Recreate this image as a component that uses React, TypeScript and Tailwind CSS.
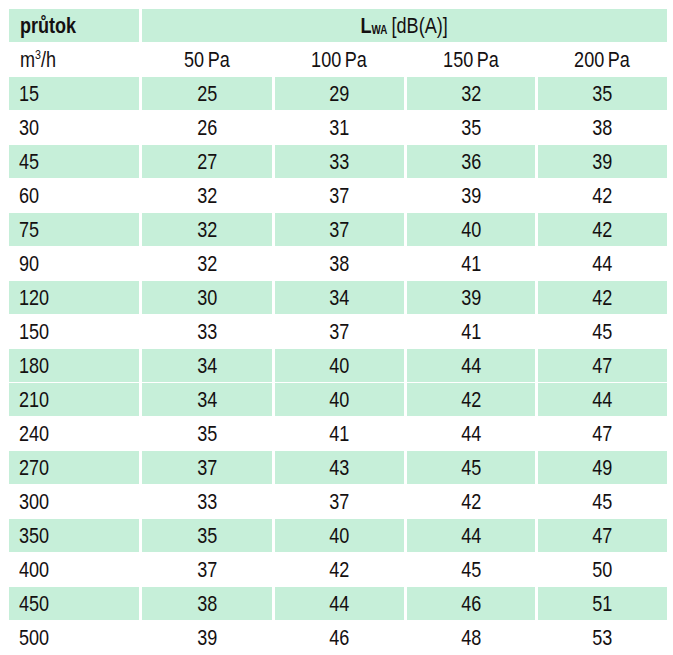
import React from "react";

const rows: [string, string, string, string, string, boolean][] = [
  ["15", "25", "29", "32", "35", true],
  ["30", "26", "31", "35", "38", false],
  ["45", "27", "33", "36", "39", true],
  ["60", "32", "37", "39", "42", false],
  ["75", "32", "37", "40", "42", true],
  ["90", "32", "38", "41", "44", false],
  ["120", "30", "34", "39", "42", true],
  ["150", "33", "37", "41", "45", false],
  ["180", "34", "40", "44", "47", true],
  ["210", "34", "40", "42", "44", true],
  ["240", "35", "41", "44", "47", false],
  ["270", "37", "43", "45", "49", true],
  ["300", "33", "37", "42", "45", false],
  ["350", "35", "40", "44", "47", true],
  ["400", "37", "42", "45", "50", false],
  ["450", "38", "44", "46", "51", true],
  ["500", "39", "46", "48", "53", false],
];

const font = {
  fontFamily: '"Liberation Sans Narrow", "Arial Narrow", "Liberation Sans", Arial, sans-serif',
};

function T({ children, left }: { children: React.ReactNode; left?: boolean }) {
  return (
    <span className={`inline-block whitespace-nowrap scale-x-[0.82] ${left ? "origin-left" : "origin-center"}`}>
      {children}
    </span>
  );
}

export default function App() {
  return (
    <div className="w-[673px] h-[655px] bg-white pt-[9px] pl-[9px] text-[#141011] text-[22px] leading-none" style={font}>
      <div className="grid grid-cols-[130px_130px_129px_128px_129px] gap-x-[3px] gap-y-[1px] auto-rows-[33px]">
        <div className="bg-[#c6efd9] flex items-center pl-[11px] font-bold">
          <T left>průtok</T>
        </div>
        <div className="col-span-4 bg-[#c6efd9] flex items-center justify-center">
          <T>
            <span className="font-bold">L</span>
            <span className="font-bold text-[12px] relative top-[1px]">WA</span>
            <span className="ml-[5px]">[dB(A)]</span>
          </T>
        </div>

        <div className="flex items-center pl-[11px]">
          <T left>
            m<sup className="text-[13px] relative top-[-8px]">3</sup>/h
          </T>
        </div>
        <div className="flex items-center justify-center"><T>50&#8201;Pa</T></div>
        <div className="flex items-center justify-center"><T>100&#8201;Pa</T></div>
        <div className="flex items-center justify-center"><T>150&#8201;Pa</T></div>
        <div className="flex items-center justify-center"><T>200&#8201;Pa</T></div>

        {rows.map((r) => {
          const bg = r[5] ? "bg-[#c6efd9]" : "bg-white";
          return (
            <React.Fragment key={r[0]}>
              <div className={`${bg} flex items-center pl-[10px]`}><T left>{r[0]}</T></div>
              <div className={`${bg} flex items-center justify-center`}><T>{r[1]}</T></div>
              <div className={`${bg} flex items-center justify-center`}><T>{r[2]}</T></div>
              <div className={`${bg} flex items-center justify-center`}><T>{r[3]}</T></div>
              <div className={`${bg} flex items-center justify-center`}><T>{r[4]}</T></div>
            </React.Fragment>
          );
        })}
      </div>
    </div>
  );
}
